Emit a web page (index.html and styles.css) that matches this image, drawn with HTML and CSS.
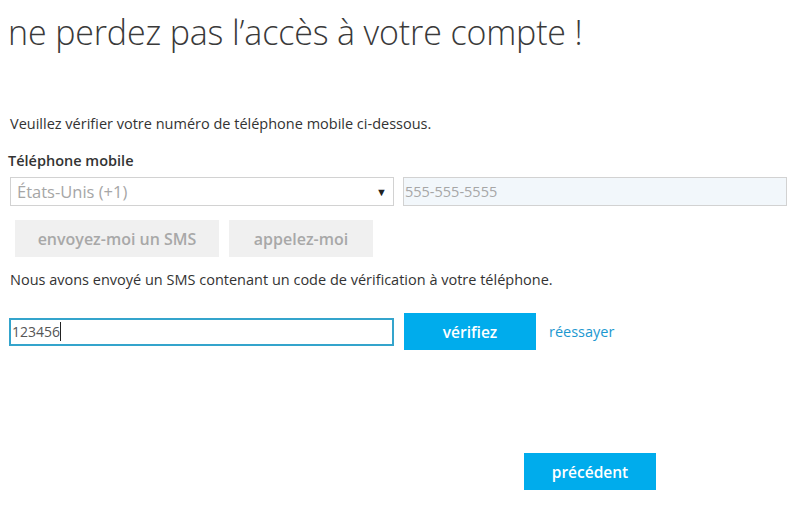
FILE: index.html
```html
<!DOCTYPE html>
<html lang="fr">
<head>
<meta charset="utf-8">
<link rel="stylesheet" href="styles.css">
</head>
<body>
<div class="page">
  <h1 class="title">ne perdez pas l’accès à votre compte !</h1>
  <p class="intro">Veuillez vérifier votre numéro de téléphone mobile ci-dessous.</p>
  <div class="label">Téléphone mobile</div>
  <div class="phone-row">
    <div class="select"><span>États-Unis (+1)</span><span class="arrow">▼</span></div>
    <div class="phone">555-555-5555</div>
  </div>
  <div class="btn-row">
    <div class="btn-gray btn-sms">envoyez-moi un SMS</div>
    <div class="btn-gray btn-call">appelez-moi</div>
  </div>
  <p class="sent">Nous avons envoyé un SMS contenant un code de vérification à votre téléphone.</p>
  <div class="code-row">
    <div class="code"><span>123456</span><span class="caret"></span></div>
    <div class="btn-blue">vérifiez</div>
    <a class="retry">réessayer</a>
  </div>
  <div class="back-row">
    <div class="btn-blue">précédent</div>
  </div>
</div>
</body>
</html>
```
FILE: styles.css
```css
html, body {
  margin: 0;
  padding: 0;
  background: #fff;
}
.page {
  font-family: "Open Sans", "Noto Sans", sans-serif;
  color: #333;
  padding: 0 0 0 8px;
  width: 792px;
  box-sizing: border-box;
}
.title {
  margin: 0;
  padding-top: 10px;
  font-size: 34px;
  font-weight: 300;
  line-height: 44px;
  color: #3a3a3a;
  letter-spacing: -0.15px;
}
.intro {
  margin: 60px 0 0 2px;
  font-size: 14.5px;
  line-height: 20px;
  color: #333;
}
.label {
  margin: 17px 0 0 0;
  font-size: 14.5px;
  font-weight: 600;
  line-height: 20px;
  color: #333;
}
.phone-row {
  display: flex;
  gap: 9px;
  margin: 6px 0 0 2px;
}
.select, .phone {
  height: 29px;
  box-sizing: border-box;
  border: 1px solid #d2d2d2;
  font-size: 14.5px;
  color: #a6a6a6;
  display: flex;
  align-items: center;
  padding: 0 6px 0 6px;
}
.select {
  width: 384px;
  justify-content: space-between;
  background: #fff;
  font-size: 16.5px;
}
.arrow {
  font-size: 11px;
  color: #222;
}
.phone {
  width: 384px;
  background: #f2f7fb;
  padding-left: 1px;
}
.btn-row {
  display: flex;
  gap: 10px;
  margin: 14px 0 0 7px;
}
.btn-gray {
  height: 37px;
  background: #f0f0f0;
  color: #a8a8a8;
  font-size: 16px;
  font-weight: 600;
  display: flex;
  align-items: center;
  justify-content: center;
}
.btn-sms { width: 204px; }
.btn-call { width: 144px; }
.sent {
  margin: 13px 0 0 2px;
  font-size: 14.5px;
  line-height: 20px;
  color: #333;
}
.code-row {
  display: flex;
  align-items: center;
  margin: 23px 0 0 0;
}
.code {
  width: 385px;
  height: 28px;
  margin: 0 0 0 1px;
  box-sizing: border-box;
  border: 2px solid #34a4cc;
  display: flex;
  align-items: center;
  padding-left: 1px;
  font-size: 14px;
  color: #555;
}
.caret {
  display: inline-block;
  width: 1px;
  height: 19px;
  background: #222;
}
.btn-blue {
  width: 132px;
  height: 37px;
  background: #00acec;
  color: #fff;
  font-size: 15.5px;
  font-weight: 600;
  display: flex;
  align-items: center;
  justify-content: center;
}
.code-row .btn-blue {
  margin-left: 10px;
}
.retry {
  margin-left: 13px;
  font-size: 14.5px;
  color: #1c98d0;
}
.back-row {
  display: flex;
  margin: 103px 0 0 516px;
}
```
